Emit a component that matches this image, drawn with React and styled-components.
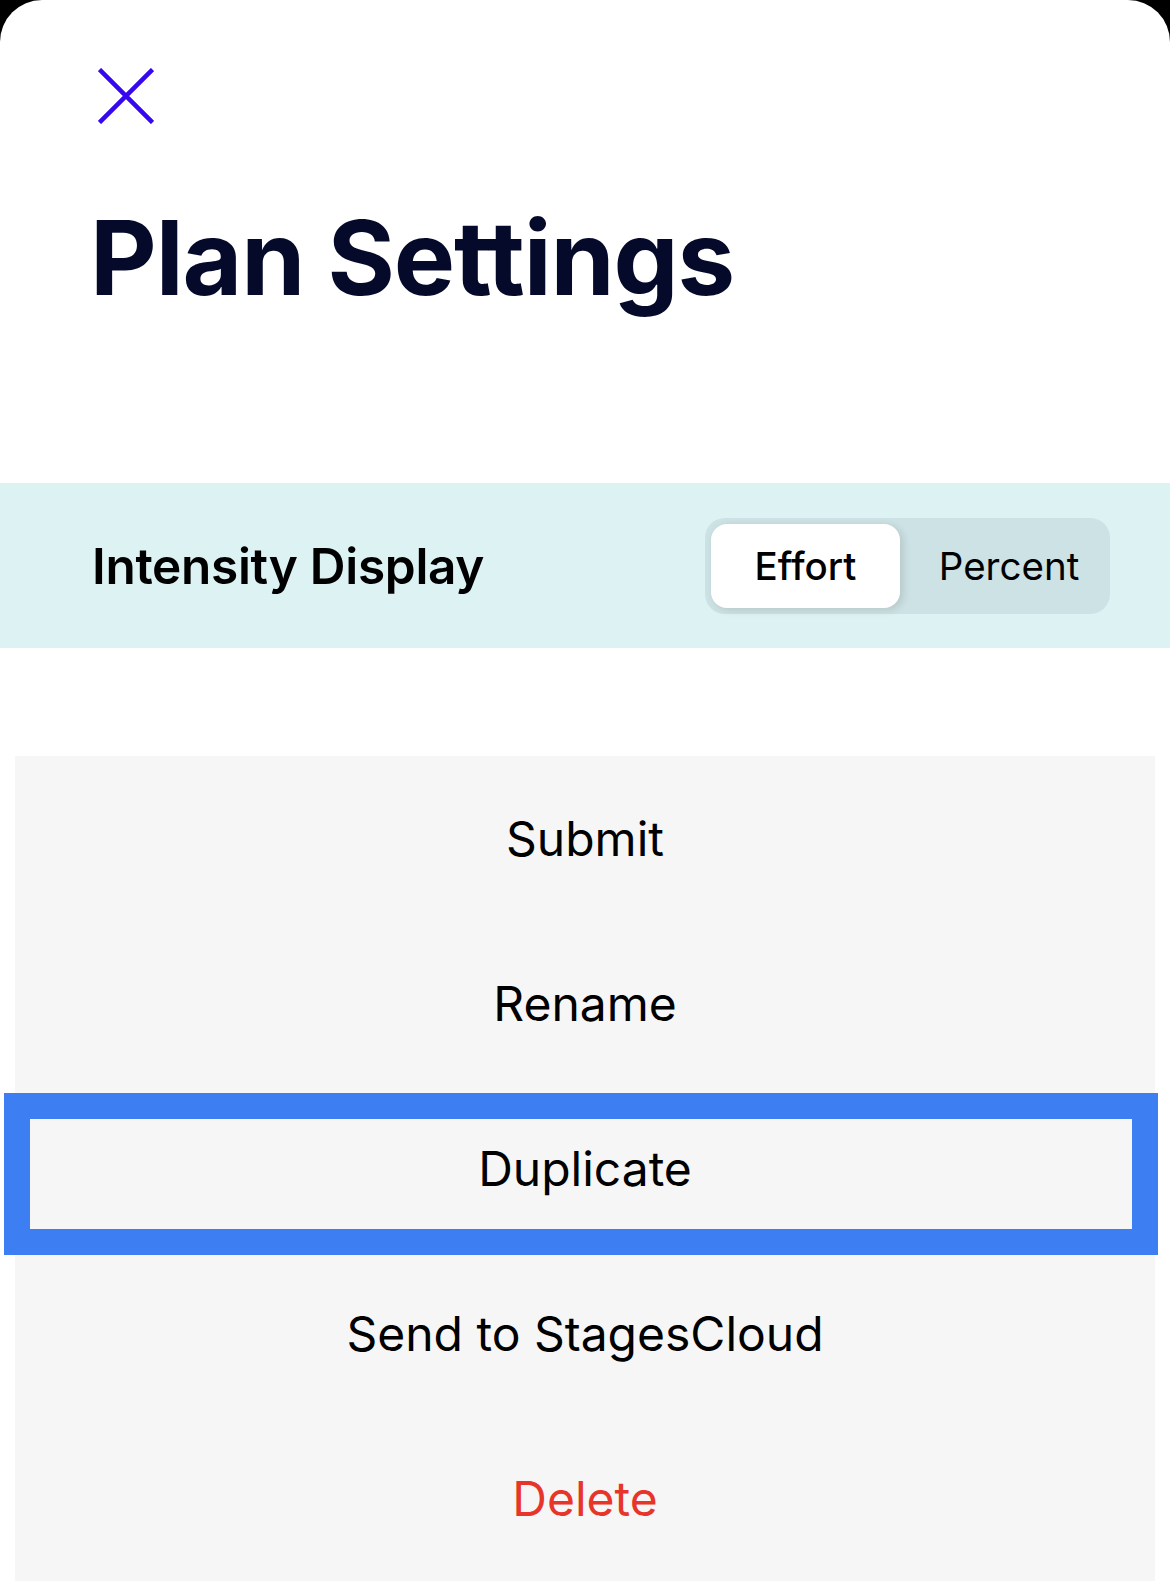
import React from "react";
import styled, { createGlobalStyle } from "styled-components";

const GlobalStyle = createGlobalStyle`
    html, body {
        margin: 0;
        padding: 0;
        background: #000;
    }
    body {
        font-family: Inter, "Noto Sans", sans-serif;
        -webkit-font-smoothing: antialiased;
    }
`;

const Sheet = styled.div`
    display: flex;
    flex-direction: column;
    min-height: 1581px;
    background: #fff;
    border-radius: 42px 42px 0 0;
    overflow: hidden;
`;

const CloseButton = styled.button`
    display: block;
    width: 56px;
    height: 56px;
    margin: 68px 0 0 98px;
    padding: 0;
    border: none;
    background: transparent;
    cursor: pointer;
`;

const Title = styled.h1`
    margin: 82px 0 0 90px;
    font-size: 103px;
    line-height: 103px;
    font-weight: 700;
    letter-spacing: -1.1px;
    color: #050a2b;
`;

const SettingRow = styled.div`
    display: flex;
    align-items: center;
    justify-content: space-between;
    height: 165px;
    margin-top: 174px;
    padding: 0 60px 0 92px;
    background: #dcf2f3;
`;

const SettingLabel = styled.span`
    font-size: 49.5px;
    font-weight: 600;
    color: #000;
    letter-spacing: -0.3px;
`;

const Segmented = styled.div`
    display: flex;
    padding: 6px;
    border-radius: 20px;
    background: #cde2e4;
`;

const Segment = styled.button`
    width: ${(p) => p.$width}px;
    height: 84px;
    padding: 0 0 0 ${(p) => p.$indent || 0}px;
    border: none;
    border-radius: 16px;
    font-family: inherit;
    font-size: 38.5px;
    font-weight: ${(p) => (p.$active ? 500 : 400)};
    color: #000;
    background: ${(p) => (p.$active ? "#fff" : "transparent")};
    box-shadow: ${(p) =>
        p.$active ? "3px 2px 8px rgba(0, 0, 0, 0.12)" : "none"};
`;

const ActionList = styled.div`
    display: flex;
    flex-direction: column;
    margin: 108px 15px 0 15px;
    background: #f6f6f6;
`;

const Action = styled.div`
    position: relative;
    display: flex;
    align-items: center;
    justify-content: center;
    height: 165px;
    font-size: 48px;
    color: ${(p) => (p.$danger ? "#e8352a" : "#000")};
`;

// focus ring drawn on top of the selected row
const FocusRing = styled.div`
    position: absolute;
    top: 7px;
    left: -11px;
    width: 1154px;
    height: 162px;
    box-sizing: border-box;
    border: 26px solid #3d7ef2;
    pointer-events: none;
`;

const actions = [
    { label: "Submit" },
    { label: "Rename" },
    { label: "Duplicate", focused: true },
    { label: "Send to StagesCloud" },
    { label: "Delete", danger: true }
];

export default function App() {
    return (
        <>
            <GlobalStyle />
            <Sheet>
                <CloseButton aria-label="Close">
                    <svg width="56" height="56" viewBox="0 0 56 56">
                        <path
                            d="M1.5 1.5 L54.5 54.5 M54.5 1.5 L1.5 54.5"
                            stroke="#3508f0"
                            strokeWidth="4.5"
                            fill="none"
                        />
                    </svg>
                </CloseButton>
                <Title>Plan Settings</Title>
                <SettingRow>
                    <SettingLabel>Intensity Display</SettingLabel>
                    <Segmented>
                        <Segment $active $width={189}>
                            Effort
                        </Segment>
                        <Segment $width={204} $indent={14}>
                            Percent
                        </Segment>
                    </Segmented>
                </SettingRow>
                <ActionList>
                    {actions.map((a) => (
                        <Action key={a.label} $danger={a.danger}>
                            {a.label}
                            {a.focused && <FocusRing />}
                        </Action>
                    ))}
                </ActionList>
            </Sheet>
        </>
    );
}
